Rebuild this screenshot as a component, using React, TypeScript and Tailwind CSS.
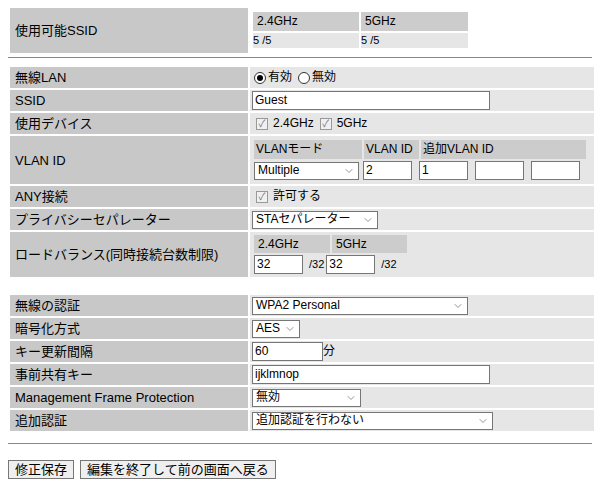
import { ChevronDown } from "lucide-react";

const font = { fontFamily: '"Liberation Sans", "Noto Sans CJK JP", sans-serif' };

const Label = ({ children, tall }: { children: React.ReactNode; tall?: boolean }) => (
  <div className={`bg-[#c8c8c8] px-[5px] flex items-center text-[13px] text-black ${tall ? "" : "h-[21px]"}`}>{children}</div>
);

const Value = ({ children, tall }: { children: React.ReactNode; tall?: boolean }) => (
  <div className={`bg-[#e6e6e6] px-[2px] flex items-center text-[12px] ${tall ? "" : "h-[21px]"}`}>{children}</div>
);

const Select = ({ value, w }: { value: string; w: string }) => (
  <div className={`${w} h-[18px] border border-[#767676] bg-white flex items-center justify-between px-[3px] text-[12px]`}>
    <span>{value}</span>
    <ChevronDown className="w-3 h-3 text-gray-500" strokeWidth={1.5} />
  </div>
);

const Input = ({ value, w }: { value?: string; w: string }) => (
  <div className={`${w} h-[19px] border border-[#767676] bg-white flex items-center px-[2px] text-[12px]`}>{value}</div>
);

const Check = ({ children }: { children: React.ReactNode }) => (
  <span className="flex items-center gap-[5px] mr-[6px]">
    <span className="w-[12px] h-[12px] border border-[#999] bg-[#f0f0f0] text-[10px] leading-[10px] text-center text-gray-500">✓</span>
    {children}
  </span>
);

export default function App() {
  return (
    <div className="w-[600px] h-[488px] bg-white pt-[8px] text-black leading-[15px]" style={font}>
      <div className="flex gap-[2px] px-[10px]">
        <div className="w-[238px] h-[45px] bg-[#c8c8c8] flex items-center px-[5px] text-[13px]">使用可能SSID</div>
        <div className="pl-[3px] pt-[4px] text-[12px]">
          <div className="flex gap-[2px]">
            <div className="w-[106px] h-[19px] bg-[#cccccc] px-[4px] flex items-center">2.4GHz</div>
            <div className="w-[107px] h-[19px] bg-[#cccccc] px-[4px] flex items-center">5GHz</div>
          </div>
          <div className="flex gap-[2px] mt-[2px] text-[11px]">
            <div className="w-[106px] h-[15px] bg-[#e6e6e6]">5 /5</div>
            <div className="w-[107px] h-[15px] bg-[#e6e6e6]">5 /5</div>
          </div>
        </div>
      </div>
      <div className="mx-[8px] mt-[4px] h-[1px] bg-[#888]" />
      <div className="grid grid-cols-[238px_344px] gap-x-[2px] gap-y-[2px] px-[10px] mt-[9px]">
        <Label>無線LAN</Label>
        <Value>
          <span className="flex items-center gap-[2px] pl-[2px]">
            <span className="w-[12px] h-[12px] rounded-full border border-[#333] bg-white flex items-center justify-center"><span className="w-[6px] h-[6px] rounded-full bg-black" /></span>有効
          </span>
          <span className="flex items-center gap-[2px] ml-[6px]">
            <span className="w-[12px] h-[12px] rounded-full border border-[#333] bg-white" />無効
          </span>
        </Value>
        <Label>SSID</Label>
        <Value><Input value="Guest" w="w-[238px]" /></Value>
        <Label>使用デバイス</Label>
        <Value><span className="pl-[4px] flex"><Check>2.4GHz</Check><Check>5GHz</Check></span></Value>
        <Label tall>VLAN ID</Label>
        <Value tall>
          <div className="py-[4px] pl-[2px]">
            <div className="flex gap-[2px] h-[19px]">
              <div className="w-[108px] bg-[#cccccc] px-[2px] flex items-center">VLANモード</div>
              <div className="w-[55px] bg-[#cccccc] px-[2px] flex items-center">VLAN ID</div>
              <div className="w-[165px] bg-[#cccccc] px-[2px] flex items-center">追加VLAN ID</div>
            </div>
            <div className="flex gap-[7px] mt-[2px] items-center">
              <Select value="Multiple" w="w-[105px]" />
              <Input value="2" w="w-[49px] -ml-[3px]" />
              <Input value="1" w="w-[49px]" />
              <Input w="w-[49px]" />
              <Input w="w-[49px]" />
            </div>
          </div>
        </Value>
        <Label>ANY接続</Label>
        <Value><span className="pl-[4px] flex"><Check>許可する</Check></span></Value>
        <Label>プライバシーセパレーター</Label>
        <Value><Select value="STAセパレーター" w="w-[126px]" /></Value>
        <Label tall>ロードバランス(同時接続台数制限)</Label>
        <Value tall>
          <div className="py-[3px] pl-[2px]">
            <div className="flex gap-[2px] h-[18px]">
              <div className="w-[76px] bg-[#cccccc] px-[4px] flex items-center">2.4GHz</div>
              <div className="w-[75px] bg-[#cccccc] px-[4px] flex items-center">5GHz</div>
            </div>
            <div className="flex items-center mt-[2px] text-[11px]">
              <Input value="32" w="w-[49px]" /><span className="ml-[6px] mr-[2px]">/32</span>
              <Input value="32" w="w-[49px]" /><span className="ml-[6px]">/32</span>
            </div>
          </div>
        </Value>
      </div>
      <div className="grid grid-cols-[238px_344px] gap-x-[2px] gap-y-[2px] px-[10px] mt-[18px]">
        <Label>無線の認証</Label>
        <Value><Select value="WPA2 Personal" w="w-[216px]" /></Value>
        <Label>暗号化方式</Label>
        <Value><Select value="AES" w="w-[48px]" /></Value>
        <Label>キー更新間隔</Label>
        <Value><Input value="60" w="w-[71px]" /><span className="text-[12px]">分</span></Value>
        <Label>事前共有キー</Label>
        <Value><Input value="ijklmnop" w="w-[238px]" /></Value>
        <Label>Management Frame Protection</Label>
        <Value><Select value="無効" w="w-[109px]" /></Value>
        <Label>追加認証</Label>
        <Value><Select value="追加認証を行わない" w="w-[241px]" /></Value>
      </div>
      <div className="mx-[8px] mt-[12px] h-[1px] bg-[#888]" />
      <div className="flex gap-[6px] px-[8px] mt-[16px]">
        <button className="h-[19px] px-[6px] border border-[#777] bg-[#efefef] text-[13px] leading-[17px]">修正保存</button>
        <button className="h-[19px] px-[6px] border border-[#777] bg-[#efefef] text-[13px] leading-[17px]">編集を終了して前の画面へ戻る</button>
      </div>
    </div>
  );
}
